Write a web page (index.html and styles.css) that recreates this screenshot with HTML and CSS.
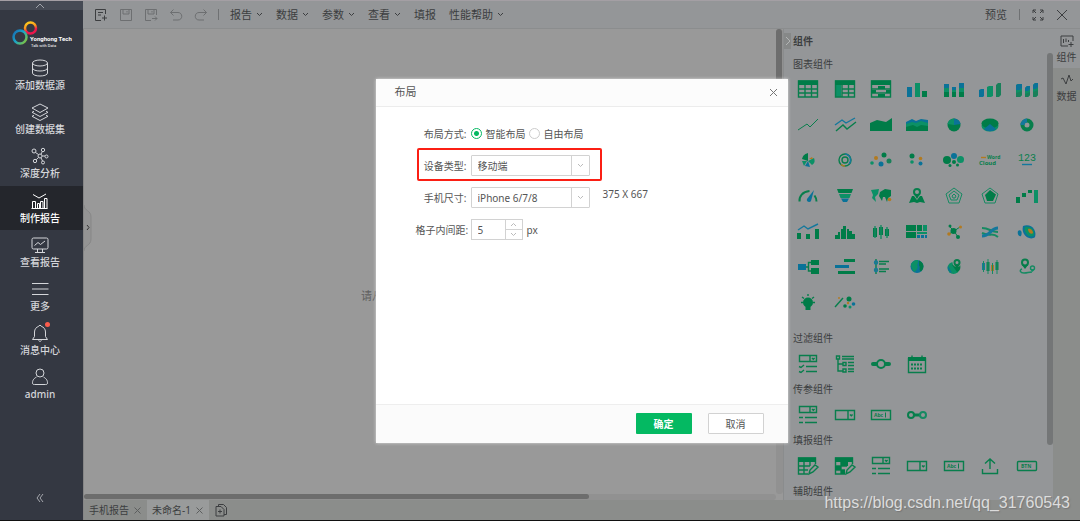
FILE: index.html
```html
<!DOCTYPE html>
<html lang="zh-CN">
<head>
<meta charset="utf-8">
<title>制作报告</title>
<link rel="stylesheet" href="styles.css">
</head>
<body>
<div class="app">
  <nav class="sidebar">
    <button class="side-top" aria-label="收起"><svg width="10" height="6" viewBox="0 0 10 6"><path class="ln" d="M1 5 5 1l4 4"/></svg></button>
    <div class="logo">
      <svg width="70" height="30" viewBox="0 0 70 30">
        <defs>
          <linearGradient id="warm" x1="0" y1="0" x2="0.3" y2="1"><stop offset="0" stop-color="#ffd21c"/><stop offset="0.5" stop-color="#f7941e"/><stop offset="0.8" stop-color="#ec174c"/></linearGradient>
          <linearGradient id="cool" x1="0" y1="0" x2="1" y2="0.8"><stop offset="0" stop-color="#1868b0"/><stop offset="0.5" stop-color="#19a5c8"/><stop offset="1" stop-color="#7cc344"/></linearGradient>
        </defs>
        <circle cx="20.500" cy="9" r="5.500" fill="none" stroke="url(#warm)" stroke-width="2.500"/>
        <circle cx="10" cy="18" r="6.500" fill="none" stroke="url(#cool)" stroke-width="2.500"/>
        <text class="brand" x="20" y="22">Yonghong Tech</text>
        <text class="slogan" x="21" y="28">Talk with Data</text>
      </svg>
    </div>
    <ul class="side-list">
      <li><a class="side-item" href="#"><svg width="20" height="18" viewBox="0 0 20 18"><g class="ln"><ellipse cx="10" cy="4" rx="7.500" ry="3"/><path d="M2.500 4v10c0 4 15 4 15 0V4M2.500 9c0 4 15 4 15 0"/></g></svg>添加数据源</a></li>
      <li><a class="side-item" href="#"><svg width="20" height="18" viewBox="0 0 20 18"><g class="ln"><path d="m10 1 8 4-8 4.500L2 5zM4 8.300 2 9.300l8 4.200 8-4.200-2-1M4 12.300l-2 1 8 4.200 8-4.200-2-1"/></g></svg>创建数据集</a></li>
      <li><a class="side-item" href="#"><svg width="20" height="18" viewBox="0 0 20 18"><g class="ln"><circle cx="10" cy="9" r="2"/><circle cx="4" cy="4" r="2"/><circle cx="13" cy="3" r="1.700"/><circle cx="16.500" cy="9.500" r="1.500"/><circle cx="5" cy="14" r="1.700"/><circle cx="13" cy="15.500" r="1.500"/><path d="m5.500 5.500 3 2M12.300 4.600l-1.300 2.600M12 9h3M8.500 10.500l-2.300 2.200M11 10.800l1.500 3.200"/></g></svg>深度分析</a></li>
      <li><a class="side-item active" href="#"><svg width="20" height="18" viewBox="0 0 20 18"><g class="ln"><path d="M2.500 16.500v-7h3v7zM7.500 16.500v-5h2v5zM10.500 16.500v-7h2.500v7zM14.500 16.500v-10h2.500v10zM1.500 16.500h16M3 2.500l6 3.500 7-4"/></g></svg>制作报告</a></li>
      <li><a class="side-item" href="#"><svg width="20" height="18" viewBox="0 0 20 18"><g class="ln"><rect x="2" y="2" width="16" height="11" rx="1.500"/><path d="m4.500 9.500 3.500-3 2.500 2 4.500-3.500M7.500 13v3M12.500 13v3M5 16.500h10"/></g></svg>查看报告</a></li>
      <li><a class="side-item" href="#"><svg width="20" height="18" viewBox="0 0 20 18"><path class="ln" d="M2 3.500h16.500M2 9h16.500M2 14.500h16.500"/></svg>更多</a></li>
      <li><a class="side-item" href="#"><svg width="20" height="18" viewBox="0 0 20 18"><g class="ln"><path d="M2.500 15.500h15l-2-3V8c0-3-2-5-4-5.500 0-1.500-3-1.500-3 0-2 .5-4 2.500-4 5.500v4.500zM8.500 16.500c.5 1 2.500 1 3 0"/></g><circle class="dot" cx="17.500" cy="0.500" r="2.500"/></svg>消息中心</a></li>
      <li><a class="side-item" href="#"><svg width="20" height="18" viewBox="0 0 20 18"><g class="ln"><circle cx="10" cy="5" r="4"/><path d="M6.500 9C3 11 2.500 13 2.500 15c0 1.500 1 1.500 2 1.500h11c1 0 2 0 2-1.500 0-2-.5-4-4-6"/></g></svg>admin</a></li>
    </ul>
    <button class="side-fold" aria-label="折叠"><svg width="8" height="10" viewBox="0 0 8 10"><path class="ln" d="M4 1 1 5l3 4M7 1 4 5l3 4"/></svg></button>
  </nav>

  <main class="main">
    <header class="toolbar">
      <div class="tools">
        <button aria-label="新建"><svg class="dark" width="14" height="14" viewBox="0 0 14 14"><path class="ln" d="M11.500 6V1.500h-10v11H7M4 4.500h5M4 7h3M10.500 7.500v5M8 10h5"/></svg></button>
        <button aria-label="保存"><svg width="14" height="14" viewBox="0 0 14 14"><path class="ln" d="M1.500 1.500h11v11h-11zM4 1.500V6h6V1.500M8 3v1.500"/></svg></button>
        <button aria-label="另存为"><svg width="14" height="14" viewBox="0 0 14 14"><path class="ln" d="M12.500 7V1.500h-11v11H7M4 1.500V6h6V1.500M8 3v1.500M8 10.500h5M11 8.500l2 2-2 2"/></svg></button>
        <button aria-label="撤销"><svg width="14" height="14" viewBox="0 0 14 14"><path class="ln" d="M4.500 1.500 1.500 4.500l3 3M1.500 4.500H9c5 0 5 7.500 0 7.500H4"/></svg></button>
        <button aria-label="重做"><svg width="14" height="14" viewBox="0 0 14 14"><path class="ln" d="m9.500 1.500 3 3-3 3M12.500 4.500H5c-5 0-5 7.500 0 7.500h5"/></svg></button>
      </div>
      <span class="rule"></span>
      <div class="menus">
        <button>报告<svg width="7" height="5" viewBox="0 0 7 5"><path class="ln" d="m1 1 2.500 2.500L6 1"/></svg></button>
        <button>数据<svg width="7" height="5" viewBox="0 0 7 5"><path class="ln" d="m1 1 2.500 2.500L6 1"/></svg></button>
        <button>参数<svg width="7" height="5" viewBox="0 0 7 5"><path class="ln" d="m1 1 2.500 2.500L6 1"/></svg></button>
        <button>查看<svg width="7" height="5" viewBox="0 0 7 5"><path class="ln" d="m1 1 2.500 2.500L6 1"/></svg></button>
        <button>填报</button>
        <button>性能帮助<svg width="7" height="5" viewBox="0 0 7 5"><path class="ln" d="m1 1 2.500 2.500L6 1"/></svg></button>
      </div>
      <div class="right-tools">
        <button>预览</button>
        <span class="rule"></span>
        <button aria-label="全屏"><svg width="12" height="12" viewBox="0 0 12 12"><path class="ln" d="M1 4V1h3M1 1l3 3M8 1h3v3M11 1 8 4M1 8v3h3M1 11l3-3M11 8v3H8M11 11 8 8"/></svg></button>
        <button aria-label="关闭"><svg class="dark" width="12" height="12" viewBox="0 0 12 12"><path class="ln" d="m1 1 10 10M11 1 1 11"/></svg></button>
      </div>
    </header>

    <div class="work">
      <section class="canvas">
        <p class="hint">请从右侧拖拽组件到画布中</p>
        <div class="vtrack"><div class="vthumb"></div></div>
        <div class="htrack"><div class="hthumb"></div></div>
        <button class="handle" aria-label="展开"><svg width="9" height="46" viewBox="0 0 9 46"><path class="tab-shape" d="M0 0c0 6 7 5 7 12v22c0 7-7 6-7 12"/><path class="ln" d="m3 20 2 2.500L3 25"/></svg></button>
      </section>

      <aside class="panel">
        <button class="collapse" aria-label="收起面板"><svg width="6" height="10" viewBox="0 0 6 10"><path class="ln" d="m1 1 4 4-4 4"/></svg></button>
        <div class="parts">
          <h2>组件</h2>
          <h3>图表组件</h3>
          <div class="grid charts">
            <button><svg class="ic" viewBox="0 0 24 20"><path class="lg" d="M2.500 2h19v16h-19zM2 10h20M2 14h20M9 5v13M15.500 5v13"/><path class="g" d="M2 1.500h20V6H2z"/></svg></button>
            <button><svg class="ic" viewBox="0 0 24 20"><path class="m" d="M2 6h6v12H2z"/><path class="lg" d="M2.500 2h19v16h-19zM9 10h13M9 14h13M9 5v13M15.500 5v13"/><path class="g" d="M2 1.500h20V6H2z"/></svg></button>
            <button><svg class="ic" viewBox="0 0 24 20"><path class="lg" d="M2.500 2h19v16h-19zM2 10h20M2 14h20"/><path class="g" d="M2 1.500h20V6H2zM9 7h7v3H9zM2 11h5v3H2zM17 11h5v3h-5zM9 15h7v3H9z"/></svg></button>
            <button><svg class="ic" viewBox="0 0 24 20"><path class="b" d="M2 8h5v10H2z"/><path class="m" d="M10 4h5v14h-5z"/><path class="g" d="M17 12h5v6h-5z"/></svg></button>
            <button><svg class="ic" viewBox="0 0 24 20"><path class="b" d="M2 5h5v4H2zM10 8h4v4h-4zM17 4h5v5h-5z"/><path class="m" d="M2 9h5v4H2zM10 11h4v2h-4zM17 9h5v4h-5z"/><path class="g" d="M2 13h5v5H2zM10 13h4v5h-4zM17 13h5v5h-5z"/></svg></button>
            <button><svg class="ic" viewBox="0 0 24 20"><path class="b" d="m1 11 2-1h3v7l-1 1H1z"/><path class="m" d="m9 8 2-1h4v10l-2 1H9z"/><path class="s" d="m18 6 2-2h3v12l-2 2h-3z"/></svg></button>
            <button><svg class="ic" viewBox="0 0 24 20"><path class="m" d="m1 6 2-1h4v11l-2 2H1zM10 9l2-2h3v9l-2 2h-3zM18 6l2-2h3v12l-2 2h-3z"/><path class="b" d="m1 6 2-1h4v4l-2 2H1zM10 9l2-2h3v3l-2 2h-3zM18 6l2-2h3v4l-2 2h-3z"/><path class="s" d="m1 14 6-2v4l-2 2H1zM10 15l5-2v3l-2 2h-3zM18 13l5-2v5l-2 2h-3z"/></svg></button>

            <button><svg class="ic" viewBox="0 0 24 20"><path class="lg thin" d="m2 15 9-6 3 3 8-8"/></svg></button>
            <button><svg class="ic" viewBox="0 0 24 20"><path class="lb" d="m2 10 7-5 4 3 9-5"/><path class="lg" d="m3 16 7-6 4 4 9-7"/></svg></button>
            <button><svg class="ic" viewBox="0 0 24 20"><path class="g" d="m1 8 7-3 9 2 6-4v13H1z"/></svg></button>
            <button><svg class="ic" viewBox="0 0 24 20"><path class="b" d="m1 7 6-3 4 2 5-2 7 1v5H1z"/><path class="m" d="m1 9 6-2 4 1 5-2 7 2v6H1z"/><path class="g" d="m1 12 7-2 4 2 4-2 7 1v5H1z"/></svg></button>
            <button><svg class="ic" viewBox="0 0 24 20"><circle class="g" cx="12" cy="10" r="6.500"/><path class="b" d="M12 10V3.500a6.500 6.500 0 0 1 6.500 5.500z"/><path class="m" d="M12 10V3.500a6.500 6.500 0 0 0-6.500 5.500z"/></svg></button>
            <button><svg class="ic" viewBox="0 0 24 20"><ellipse class="m" cx="12" cy="11" rx="8.500" ry="5.500"/><ellipse class="g" cx="12" cy="8.500" rx="8.500" ry="5"/><path class="b" d="m12 9 6 5c-3 3-9 3-12 0z"/></svg></button>
            <button><svg class="ic" viewBox="0 0 24 20"><circle class="lg w4" cx="12" cy="10" r="4.500"/><path class="lb w4" d="M12 5.500A4.500 4.500 0 0 0 7.500 10"/></svg></button>

            <button><svg class="ic" viewBox="0 0 24 20"><path class="g" d="M12 11 6 9c1-4 3-5 6-6z"/><path class="m" d="m11 11-3 5-2-5zM12 11l6-3c1 3 1 5-2 7z"/><path class="b" d="m12 11 2 6-5-1z"/><path class="o" d="m13 9 3-2 1 2z"/></svg></button>
            <button><svg class="ic" viewBox="0 0 24 20"><circle class="lg" cx="12" cy="10" r="6"/><circle class="lg" cx="12" cy="10" r="3"/><path class="lb" d="M12 4a6 6 0 0 1 4 10"/><path class="lo" d="M8 14.500a6 6 0 0 0 4 1.500"/></svg></button>
            <button><svg class="ic" viewBox="0 0 24 20"><circle class="m" cx="3" cy="13" r="1.800"/><circle class="o" cx="7" cy="8" r="2"/><circle class="b" cx="12" cy="14" r="2.500"/><circle class="g" cx="15" cy="5" r="2.500"/><circle class="s" cx="20" cy="11" r="2.500"/></svg></button>
            <button><svg class="ic" viewBox="0 0 24 20"><circle class="g" cx="7" cy="6" r="2.500"/><circle class="m" cx="7" cy="12" r="1.800"/><circle class="o" cx="15.500" cy="8.500" r="1.800"/><circle class="b" cx="15.500" cy="13.500" r="2"/></svg></button>
            <button><svg class="ic" viewBox="0 0 24 20"><circle class="g" cx="5" cy="10" r="4"/><circle class="b" cx="12" cy="6" r="3"/><circle class="m" cx="18.500" cy="9.500" r="3.500"/><circle class="g" cx="12" cy="12" r="2"/><circle class="g" cx="8" cy="15.500" r="1.500"/><circle class="g" cx="15.500" cy="15" r="1.500"/></svg></button>
            <button><svg class="ic" viewBox="0 0 24 20"><path class="lo" d="M3 7.500h5"/><text class="tiny" x="9" y="9">Word</text><text class="tiny big" x="1" y="15">Cloud</text></svg></button>
            <button><svg class="ic" viewBox="0 0 24 20"><text class="num" x="3" y="11">123</text><path class="lb" d="M7 14.500h10"/></svg></button>

            <button><svg class="ic" viewBox="0 0 24 20"><path class="lg w2" d="M3.500 15.500c-.5-5 3-10 10-10.500M20.500 15.500c0-2-.5-4-2-6"/><path class="b" d="m18 4-3 11c-1 2-5 1-4-2z"/></svg></button>
            <button><svg class="ic" viewBox="0 0 24 20"><path class="g" d="M4 3h16l-1.500 4h-13z"/><path class="m" d="M6 8h12l-1.500 4h-9z"/><path class="b" d="M8 12.500h8L14 16h-4z"/></svg></button>
            <button><svg class="ic" viewBox="0 0 24 20"><path class="m" d="m2 4 8-1-1 5-3 3 1 5-4-4 1-3z"/><path class="g" d="m11 6 5-3 6 1v6l-3 2-1 4-2-5h-2l-1 4-3-5z"/><circle class="o" cx="20.500" cy="13.500" r="1.800"/></svg></button>
            <button><svg class="ic" viewBox="0 0 24 20"><path class="g" d="m7 10 2 0 3 4 3-4h2l3 7-5-1-3 1-3-1-5 1z"/><circle class="lg w2" cx="12" cy="6" r="3"/><path class="g" d="M9 8h6l-3 5z"/></svg></button>
            <button><svg class="ic" viewBox="0 0 24 20"><path class="lm thin" d="m12 2 8 6-3 9H7L4 8zM12 5l5 4-2 5H9L7 9zM12 8l2 2-1 2h-2l-1-2z"/></svg></button>
            <button><svg class="ic" viewBox="0 0 24 20"><path class="lm thin" d="m12 2 8 6-3 9H7L4 8z"/><path class="g" d="m12 4 6 4.500-3 6.500H9L7 9z"/></svg></button>
            <button><svg class="ic" viewBox="0 0 24 20"><path class="g" d="M1 11h4v6H1zM7 7h4v4H7zM13 4h4v3h-4z"/><path class="m" d="M19 4h4v13h-4z"/></svg></button>

            <button><svg class="ic" viewBox="0 0 24 20"><path class="g" d="M1 11h4v6H1zM10 12h4v5h-4zM19 7h4v10h-4z"/><path class="lb" d="m2 8 6-4 4 3 10-5"/></svg></button>
            <button><svg class="ic" viewBox="0 0 24 20"><path class="g" d="M2 13h3v4H2zM5 10h2v7H5zM8 7h2v10H8zM10 4h3v13h-3zM14 7h2v10h-2zM16 9h3v8h-3zM19 12h3v5h-3z"/></svg></button>
            <button><svg class="ic" viewBox="0 0 24 20"><path class="g" d="M4 6h4v9H4zM10 5h4v8h-4zM16 7h4v7h-4z"/><path class="lm" d="M6 4v12M12 3v14M18 5v11"/></svg></button>
            <button><svg class="ic" viewBox="0 0 24 20"><path class="g" d="M1 3h10v6H1zM12 3h5v6h-5zM1 10h10v6H1z"/><path class="m" d="M18 3h4v6h-4zM12 10h10v2H12z"/><path class="b" d="M12 13h3v3h-3zM16 13h3v3h-3zM20 13h2v3h-2z"/></svg></button>
            <button><svg class="ic" viewBox="0 0 24 20"><path class="lg thin" d="m7 4 5 5 6-4M12 9l-5 3M12 9l4 6"/><circle class="g" cx="11.500" cy="9" r="3"/><circle class="g" cx="8" cy="4" r="1.500"/><circle class="o" cx="18.500" cy="5" r="1.500"/><circle class="o" cx="7" cy="12" r="1.800"/><circle class="g" cx="16" cy="15" r="2"/></svg></button>
            <button><svg class="ic" viewBox="0 0 24 20"><path class="lm w2" d="M4 6c8 0 8 4 16 4M4 11c9 4 10-1 16 4"/><path class="lb w3" d="M4 14c8 0 9-8 16-8"/></svg></button>
            <button><svg class="ic" viewBox="0 0 24 20"><path class="b" d="M3 9c2-2 5 0 3 5-2 1-4-2-3-5z"/><path class="b" d="M8 4c9-3 14 5 12 11-3 3-9 1-11-3-1-2-2-4-1-8z"/><path class="m" d="M10 5c7-1 10 4 9 8-2 3-7 1-8-2-1-2-2-3-1-6z"/><path class="o" d="M13 7c3-1 5 2 5 4-1 2-5 0-5-4z"/></svg></button>

            <button><svg class="ic" viewBox="0 0 24 20"><path class="b" d="M2 7h8v6H2z"/><path class="g" d="M15 3h8v5h-8zM15 11h8v6h-8z"/><path class="lg" d="M10 10h2.500M15 5.500h-2.500V14H15"/></svg></button>
            <button><svg class="ic" viewBox="0 0 24 20"><path class="g" d="M11 2h11v3H11zM5 14h17v3H5z"/><path class="b" d="M2 8h14v3H2z"/></svg></button>
            <button><svg class="ic" viewBox="0 0 24 20"><path class="lg" d="M7 2v15M10 4.500h10M10 7h7M10 12h10M10 14.500h7"/><circle class="lb" cx="7" cy="5.500" r="1.500"/><circle class="lb" cx="7" cy="13" r="1.500"/></svg></button>
            <button><svg class="ic" viewBox="0 0 24 20"><circle class="b" cx="12" cy="9.500" r="6.500"/><path class="m" d="M6 7c3-5 7-4 7-4 1 4-2 4 0 7-2 4-2 4-4 5-2-3-3-5-3-8z"/><path class="g" d="M14 3.500c5 2 6 7 2 11-3-2 0-4-2-6z"/></svg></button>
            <button><svg class="ic" viewBox="0 0 24 20"><circle class="m" cx="11.500" cy="11" r="6"/><path class="b" d="m6 9 4 7c-3-1-5-4-4-7z"/><path class="g" d="m10 8 5 7c3-1 4-4 3-8z"/><circle class="halo" cx="15" cy="5.500" r="2.500"/><circle class="lg w2" cx="15" cy="5.500" r="2.500"/><path class="g" d="M12.500 8h5L15 12z"/></svg></button>
            <button><svg class="ic" viewBox="0 0 24 20"><path class="lb w3" d="M5.500 6v7"/><path class="lg w3" d="M10 5v9M19 5v8"/><path class="lo w3" d="M14.500 8v6"/><path class="lm thin" d="M5.500 4v11M10 2v15M14.500 6v11M19 3v14"/></svg></button>
            <button><svg class="ic" viewBox="0 0 24 20"><circle class="lg w2" cx="10" cy="5.500" r="3"/><path class="g" d="M7 8h6l-3 4z"/><circle class="lm" cx="17.500" cy="11" r="2"/><path class="m" d="M15.500 12.500h4l-2 2.500z"/><path class="lm" d="M7 12c-3 1-2 4 2 4s4-1 8-1"/></svg></button>

            <button><svg class="ic" viewBox="0 0 24 20"><circle class="g" cx="12" cy="9.500" r="5"/><path class="g" d="M9.500 13h5v4h-5z"/><path class="lg" d="M12 1v2M5 9.500h2M17 9.500h2M6 4l2 1.500M18 4l-2 1.500"/></svg></button>
            <button><svg class="ic" viewBox="0 0 24 20"><path class="lg" d="m2 14 8-9"/><path class="lo" d="M6 4v2"/><circle class="g" cx="16" cy="6" r="2.500"/><circle class="g" cx="12" cy="13" r="1.800"/><circle class="o" cx="15" cy="10" r="1.200"/><circle class="m" cx="17" cy="14" r="1.500"/><circle class="b" cx="20.500" cy="11" r="1.800"/></svg></button>
          </div>
          <h3>过滤组件</h3>
          <div class="grid">
            <button><svg class="ic" viewBox="0 0 24 20"><path class="lg" d="M3.500 1.500h17v6h-17zM14 1.500v6M16 4l1.300 1.300L18.600 4M3 12.500l2 1L8 11M10 12.500h11M3 17.500l2 1L8 16M10 17.500h11"/></svg></button>
            <button><svg class="ic" viewBox="0 0 24 20"><path class="lg" d="M3.500 2h3v3h-3zM9 2.500h12M9 5h12M5 5v12h5M5 10h5M10 8.500h3v3h-3zM15 8.500h6M15 11.500h6M10 15h3v3h-3zM15 15h6M15 17.500h6"/></svg></button>
            <button><svg class="ic" viewBox="0 0 24 20"><path class="lg w4 round" d="M4 10h3M17 10h3"/><circle class="lg w2" cx="12" cy="10" r="4"/></svg></button>
            <button><svg class="ic" viewBox="0 0 24 20"><path class="lg" d="M3.500 4.500h17v14h-17zM7 1.500V4M17 1.500V4"/><path class="g" d="M3 3h18v4H3z"/><path class="lg dash" d="M6 10.500h12M6 14.500h12"/></svg></button>
          </div>
          <h3>传参组件</h3>
          <div class="grid">
            <button><svg class="ic" viewBox="0 0 24 20"><path class="lg" d="M3.500 1.500h17v6h-17zM14 1.500v6M16 4l1.300 1.300L18.600 4M3 12.500h4M9 12.500h12M3 17.500h4M9 17.500h12"/></svg></button>
            <button><svg class="ic" viewBox="0 0 24 20"><path class="lg" d="M2.500 5.500h19v9h-19zM15 5.500v9M17 9.500l1.300 1.300 1.300-1.300"/></svg></button>
            <button><svg class="ic" viewBox="0 0 24 20"><path class="lg" d="M2.500 5.500h19v9h-19z"/><path class="lg thin" d="M16.500 7.500v5"/><text class="tiny" x="5" y="12">Abc</text></svg></button>
            <button><svg class="ic" viewBox="0 0 24 20"><path class="lg w3" d="M8 10h8"/><circle class="lg w2" cx="6" cy="10" r="3"/><circle class="lm w2" cx="18" cy="10" r="3"/></svg></button>
          </div>
          <h3>填报组件</h3>
          <div class="grid">
            <button><svg class="ic" viewBox="0 0 24 20"><path class="lg" d="M12 18H2.500V2h17v6M2 10h12M2 14h10M8 5v13M14 5v5M13 18l1-4 5-5 3 2-5 5z"/><path class="g" d="M2 1.500h18V6H2z"/></svg></button>
            <button><svg class="ic" viewBox="0 0 24 20"><path class="lg" d="M12 18H2.500V2h17v6M2 10h12M2 14h10M8 5v13M14 5v5M13 18l1-4 5-5 3 2-5 5z"/><path class="g" d="M2 1.500h18V6H2zM8 6h7v4H8zM2 10h6v4H2zM8 14h4v4H8z"/></svg></button>
            <button><svg class="ic" viewBox="0 0 24 20"><path class="lg" d="M3.500 1.500h17v6h-17zM14 1.500v6M16 4l1.300 1.300L18.600 4M3 12.500h4M9 12.500h12M3 17.500h4M9 17.500h12"/></svg></button>
            <button><svg class="ic" viewBox="0 0 24 20"><path class="lg" d="M2.500 5.500h19v9h-19zM15 5.500v9M17 9.500l1.300 1.300 1.300-1.300"/></svg></button>
            <button><svg class="ic" viewBox="0 0 24 20"><path class="lg" d="M2.500 5.500h19v9h-19z"/><path class="lg thin" d="M16.500 7.500v5"/><text class="tiny" x="5" y="12">Abc</text></svg></button>
            <button><svg class="ic" viewBox="0 0 24 20"><path class="lg" d="M12 13V3M7 7.500 12 3l5 4.500M4.500 13v4.500h15V13"/></svg></button>
            <button><svg class="ic" viewBox="0 0 24 20"><rect class="lg" x="2.500" y="5.500" width="19" height="9" rx="1"/><text class="tiny" x="6" y="12">BTN</text></svg></button>
          </div>
          <h3>辅助组件</h3>
        </div>
        <div class="ptrack"><div class="pthumb"></div></div>
        <div class="side-tabs">
          <button class="on"><svg width="16" height="14" viewBox="0 0 16 14"><path class="ln" d="M14 7V2H2v10h7M4.500 5v4M7 4.500V8M9.500 6v2M12 8v5M9.500 10.500h5"/></svg>组件</button>
          <button><svg width="16" height="14" viewBox="0 0 16 14"><path class="ln" d="m2 6 2-1 3 6 3-9 2 6 2-2"/></svg>数据</button>
        </div>
      </aside>
    </div>

    <footer class="tabs">
      <button class="tab">手机报告<svg width="7" height="7" viewBox="0 0 7 7"><path class="ln" d="m.5.5 6 6M6.500.5l-6 6"/></svg></button>
      <button class="tab on">未命名-1<svg width="7" height="7" viewBox="0 0 7 7"><path class="ln" d="m.5.5 6 6M6.500.5l-6 6"/></svg></button>
      <button class="add" aria-label="新建报告"><svg width="12" height="14" viewBox="0 0 12 14"><path class="ln" d="M3.500 3V1.500h5l3 3v7H9M1 3.500h5l3 3V13H1zM5 6.500v4M3 8.500h4"/></svg></button>
    </footer>

    <div class="overlay">
      <form class="dialog" role="dialog" aria-labelledby="dlg-title">
        <header class="dlg-head"><h1 id="dlg-title">布局</h1><button type="button" aria-label="关闭"><svg width="9" height="9" viewBox="0 0 9 9"><path class="ln" d="m1 1 7 7M8 1 1 8"/></svg></button></header>
        <div class="dlg-body">
          <div class="row">
            <span class="label">布局方式:</span>
            <div class="radios">
              <label><input type="radio" name="mode" checked>智能布局</label>
              <label><input type="radio" name="mode">自由布局</label>
            </div>
          </div>
          <div class="row marked">
            <label class="label" for="device">设备类型:</label>
            <div class="pick"><select id="device"><option>移动端</option></select><svg width="7" height="5" viewBox="0 0 7 5"><path class="ln" d="m1 1 2.500 2.500L6 1"/></svg></div>
          </div>
          <div class="row">
            <label class="label" for="phone">手机尺寸:</label>
            <div class="pick"><select id="phone"><option>iPhone 6/7/8</option></select><svg width="7" height="5" viewBox="0 0 7 5"><path class="ln" d="m1 1 2.500 2.500L6 1"/></svg></div>
            <span class="size">375 X 667</span>
          </div>
          <div class="row">
            <label class="label" for="gap">格子内间距:</label>
            <div class="spin">
              <input id="gap" type="text" value="5">
              <div class="steps">
                <button type="button" aria-label="增加"><svg width="7" height="5" viewBox="0 0 7 5"><path class="ln" d="M1 4 3.500 1.500 6 4"/></svg></button>
                <button type="button" aria-label="减少"><svg width="7" height="5" viewBox="0 0 7 5"><path class="ln" d="m1 1 2.500 2.500L6 1"/></svg></button>
              </div>
            </div>
            <span class="unit">px</span>
          </div>
        </div>
        <footer class="dlg-foot"><button type="button" class="ok">确定</button><button type="button" class="cancel">取消</button></footer>
      </form>
    </div>
  </main>
  <span class="watermark">https://blog.csdn.net/qq_31760543</span>
</div>
</body>
</html>
```
FILE: styles.css
```css
*, *::after { box-sizing: border-box; }
body {
  margin: 0;
  font: 10px/14px "Noto Sans", "Noto Sans CJK SC", sans-serif;
  color: #3c3e40;
}
h1, h2, h3, p, ul { margin: 0; padding: 0; font-size: inherit; font-weight: normal; }
ul { list-style: none; }
button, input, select { font: inherit; color: inherit; border: 0; padding: 0; background: none; border-radius: 0; }
button { display: flex; align-items: center; justify-content: center; }
svg { display: block; flex: none; }
.ln { fill: none; stroke: currentColor; stroke-width: 1; }

.app {
  position: relative;
  display: flex;
  height: 100vh;
  border-top: 1px solid #a49fa4;
  border-bottom: 1px solid #111;
  overflow: hidden;
}

/* Sidebar */
.sidebar {
  flex: none;
  width: 83px;
  display: flex;
  flex-direction: column;
  background: #343842;
  color: #d4d6da;
}
.side-top { height: 9px; padding-right: 3px; background: #464b55; color: #a0a4aa; }
.logo { height: 44px; padding: 9px 0 0 10px; }
.logo text { fill: #fff; font-family: Roboto, sans-serif; }
.logo .brand { font-size: 6px; font-weight: bold; }
.logo .slogan { font-size: 4px; }
.side-item {
  height: 44px;
  padding: 5px 3px 0 0;
  display: flex;
  flex-direction: column;
  align-items: center;
  gap: 1px;
  color: inherit;
  text-decoration: none;
  font-weight: 500;
}
.side-item svg { overflow: visible; }
.side-item.active { background: #24262c; color: #fff; }
.side-item.active, .side-list li:nth-child(n + 5) .side-item { padding-top: 6px; }
.dot { fill: #fb5c4c; }
.side-fold { margin: auto 0 17px; padding-right: 3px; color: #a4a7ad; }

/* Toolbar */
.main { position: relative; flex: 1; min-width: 0; display: flex; flex-direction: column; }
.toolbar {
  flex: none;
  height: 28px;
  display: flex;
  align-items: center;
  padding: 0 12px 0 11px;
  background: #949698;
  border-bottom: 1px solid #8b8d8e;
  font-size: 11px;
}
.tools { display: flex; gap: 11px; color: #6d6f71; }
.dark { color: #3c3e40; }
.rule { width: 1px; height: 11px; background: #6f7173; }
.tools + .rule { margin: 0 11px 0 10px; }
.menus { display: flex; gap: 13px; }
.menus button { gap: 4px; }
.right-tools { margin-left: auto; display: flex; align-items: center; gap: 12px; }

/* Canvas */
.work { flex: 1; min-height: 0; display: flex; }
.canvas {
  position: relative;
  flex: 1;
  display: grid;
  grid-template: 1fr 6px / 1fr 7px;
  background: #999;
  border-left: 1px solid #868686;
}
.hint { align-self: center; text-align: center; padding: 68px 6px 0 0; color: #606060; font-size: 11px; }
.vtrack { background: #919191; border-radius: 3px; }
.vthumb { width: 6px; height: 55%; border-radius: 3px; background: #6d6d6d; }
.htrack { background: #919191; border-radius: 3px; }
.hthumb { width: 73%; height: 5px; border-radius: 3px; background: #6d6d6d; }
.handle { position: absolute; left: 0; top: 176px; color: #333; }
.tab-shape { fill: #949494; stroke: #878787; }

/* Component panel */
.panel { position: relative; flex: none; width: 297px; display: flex; background: #949698; border-left: 1px solid #8a8c8d; }
.collapse { position: absolute; left: 0; top: 4px; width: 7px; height: 16px; background: #868888; color: #b2b4b4; }
.parts { flex: 1; padding: 0 2px 0 6px; overflow: hidden; }
.parts h2 { height: 28px; padding: 5px 0 0 3px; font-weight: bold; }
.parts h3 { height: 14px; padding-left: 3px; }
.grid { display: grid; grid-template-columns: repeat(7, 1fr); grid-auto-rows: 37px; }
.charts { height: 250px; grid-auto-rows: 1fr; margin-bottom: 10px; }
.ic { width: 24px; height: 20px; }
.g { fill: #007c48; }
.m { fill: #0c9066; }
.s { fill: #19805a; }
.b { fill: #0a7298; }
.o { fill: #b27a20; }
.lg, .lm, .lb, .lo { fill: none; stroke: #087e4c; stroke-width: 1.4; }
.lm { stroke: #168a62; }
.lb { stroke: #14789c; }
.lo { stroke: #b27a20; }
.thin { stroke-width: 1; }
.w2 { stroke-width: 2; }
.w3 { stroke-width: 3; }
.w4 { stroke-width: 4; }
.round { stroke-linecap: round; }
.halo { fill: #949698; stroke: #949698; stroke-width: 4; }
.dash { stroke-width: 2; stroke-dasharray: 2 1; }
.tiny { fill: #087e4c; font: bold 5px "Open Sans", sans-serif; }
.tiny.big { font-size: 6px; }
.num { fill: #087e4c; font: 10px "Liberation Mono", monospace; }
.ptrack { width: 6px; padding-top: 24px; }
.pthumb { height: 392px; border-radius: 3px; background: #747677; }
.side-tabs { width: 27px; background: #8b8d8b; }
.side-tabs button { width: 100%; height: 39px; flex-direction: column; gap: 2px; }
.side-tabs .on { background: #949698; }

/* Report tabs */
.tabs { flex: none; height: 20px; display: flex; background: #8b8d8b; border-left: 1px solid #868686; }
.tab { gap: 5px; padding: 0 6px 0 5px; }
.tab.on { background: #999b9b; }
.tab svg { color: #5c5e5e; }
.add { margin-left: 6px; }

/* Layout dialog */
.overlay { position: absolute; inset: 0; display: grid; place-items: center; }
.dialog {
  width: 412px;
  display: flex;
  flex-direction: column;
  background: #fff;
  box-shadow: 0 0 3px #ddd;
  color: #555;
}
.dlg-head {
  height: 28px;
  display: flex;
  align-items: center;
  justify-content: space-between;
  padding: 0 10px 0 19px;
  background: #fcfcfc;
  border-bottom: 1px solid #ececec;
  font-size: 11px;
}
.dlg-head button { color: #777; }
.dlg-body { min-height: 297px; padding: 11px 0 0 40px; display: flex; flex-direction: column; }
.row { position: relative; height: 32px; display: flex; align-items: center; gap: 4px; }
.marked::after {
  content: "";
  position: absolute;
  left: 1px;
  top: -2px;
  width: 185px;
  height: 33px;
  border: 2px solid #fb1f14;
  border-radius: 2px;
  pointer-events: none;
}
.label { width: 51px; text-align: right; white-space: nowrap; display: block; }
.radios { display: flex; gap: 3px; }
.radios label { display: flex; align-items: center; gap: 4px; }
.radios input {
  appearance: none;
  width: 11px;
  height: 11px;
  margin: 0;
  border: 1px solid #ccc;
  border-radius: 50%;
}
.radios input:checked { border-color: #04b962; background: radial-gradient(circle, #04b962 0 2px, #fff 3px); }
.pick { position: relative; width: 119px; height: 21px; }
.pick select {
  appearance: none;
  width: 100%;
  height: 100%;
  padding: 0 24px 0 6px;
  border: 1px solid #d2d2d2;
  border-radius: 1px;
  background: linear-gradient(#d2d2d2, #d2d2d2) right 17px top / 1px 100% no-repeat;
}
.pick svg { position: absolute; right: 6px; top: 8px; color: #bbb; }
.size { align-self: flex-start; padding: 5px 0 0 9px; }
.spin { width: 52px; height: 21px; display: flex; border: 1px solid #d2d2d2; }
.spin input { flex: 1; min-width: 0; padding-left: 6px; outline: 0; }
.steps { width: 17px; display: flex; flex-direction: column; border-left: 1px solid #d2d2d2; color: #bbb; }
.steps button { flex: 1; }
.steps button + button { border-top: 1px solid #d2d2d2; }
.dlg-foot {
  height: 39px;
  display: flex;
  align-items: center;
  justify-content: flex-end;
  gap: 16px;
  padding-right: 24px;
  background: #fbfbfb;
  border-top: 1px solid #eee;
}
.dlg-foot button { width: 56px; height: 21px; border-radius: 1px; }
.ok { background: #04b962; color: #fff; font-weight: bold; }
.cancel { background: #fff; border: 1px solid #d2d2d2; }

.watermark {
  position: absolute;
  right: 10px;
  bottom: 7px;
  font: 16px/20px "Liberation Sans", sans-serif;
  color: #dcdcdc;
  text-shadow: 1px 1px 1px #777;
}
```
